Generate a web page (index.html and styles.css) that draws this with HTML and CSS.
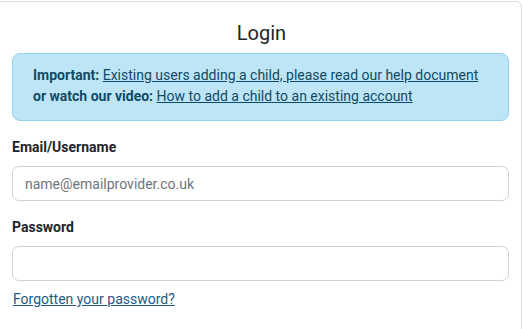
FILE: index.html
```html
<!DOCTYPE html>
<html>
  <head>
    <title>Login</title>
    <meta charset="UTF-8">
    <meta name="viewport" content="width=device-width,initial-scale=1">
    <link rel="stylesheet" href="styles.css">
  </head>
  <body>
    <section class="card">
      <h1 class="card-title">Login</h1>

      <div class="notice">
        <strong>Important:</strong> <a href="#">Existing users adding a child, please read our help document</a><br>
        <strong>or watch our video:</strong> <a href="#">How to add a child to an existing account</a>
      </div>

      <form class="login-form">
        <label for="email">Email/Username</label>
        <input id="email" type="text" placeholder="name@emailprovider.co.uk">

        <label for="password">Password</label>
        <input id="password" type="password">

        <a class="forgot" href="#">Forgotten your password?</a>
      </form>
    </section>
  </body>
</html>
```

FILE: styles.css
```css
html * {
  box-sizing: border-box;
}

body {
  margin: 0;
  font-family: Roboto, "Liberation Sans", sans-serif;
  font-size: 14px;
  color: #212529;
  background: #fff;
}

.card {
  margin: 1px 0 0 -6px;
  width: 528px;
  border: 1px solid #dcdcdc;
  border-radius: 6px;
  padding: 0 12px 12px 17px;
  min-height: 340px;
}

.card-title {
  margin: 0;
  padding: 19px 0 8px 2px;
  text-align: center;
  font-size: 20px;
  font-weight: 400;
  line-height: 24px;
}

.notice {
  background: #bee5f5;
  border: 1px solid #92d3ef;
  border-radius: 8px;
  padding: 11px 20px 13px;
  line-height: 21px;
  color: #0f4a66;
  margin-bottom: 16px;
}

.notice a {
  color: #0f4a66;
}

.login-form {
  display: flex;
  flex-direction: column;
}

.login-form label {
  font-weight: 700;
  line-height: 20px;
  margin-bottom: 9px;
}

.login-form input {
  height: 35px;
  border: 1px solid #cdd1d8;
  border-radius: 7px;
  padding: 0 12px;
  font-family: inherit;
  font-size: 14px;
  margin-bottom: 16px;
}

.login-form input::placeholder {
  color: #6c757d;
}

.forgot {
  margin-top: -8px;
  color: #1b5b86;
  line-height: 20px;
  align-self: flex-start;
  margin-left: 1px;
}
```
